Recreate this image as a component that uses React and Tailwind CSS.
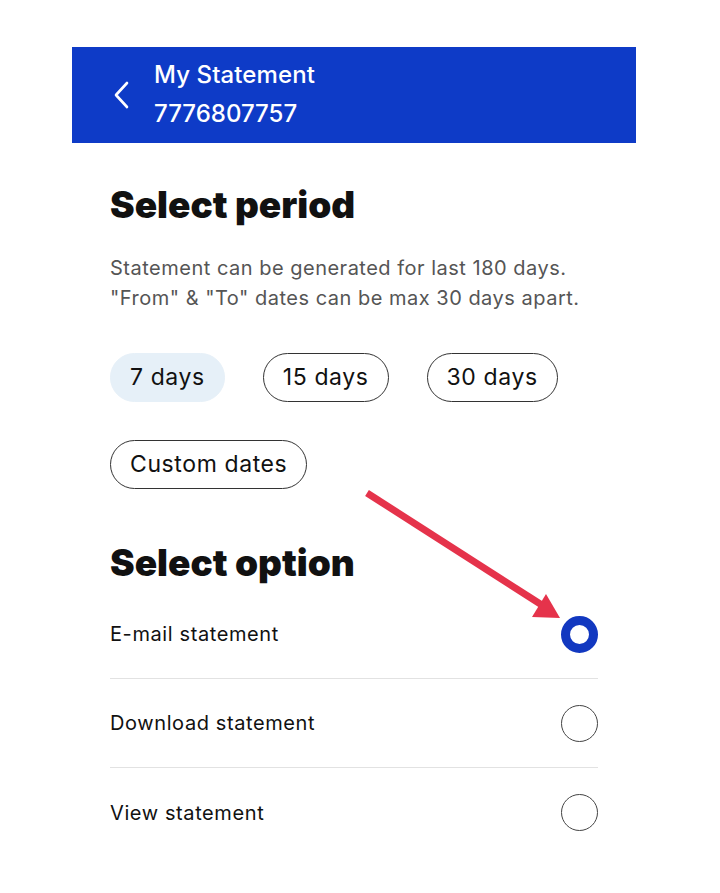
import { useState } from "react";

const periods = ["7 days", "15 days", "30 days", "Custom dates"];
const options = ["E-mail statement", "Download statement", "View statement"];

export default function App() {
  const [period, setPeriod] = useState("7 days");
  const [option, setOption] = useState("E-mail statement");

  return (
    <div className="min-h-[893px] w-[720px] bg-white pt-[47px] font-['Inter',sans-serif] text-[#111]">
      <div className="relative mx-[72px] w-[564px]">
        <div className="flex h-[96px] items-center bg-[#0e3bc7] pl-[40px] text-white">
          <svg width="20" height="30" viewBox="0 0 20 30" fill="none" className="mr-[22px]">
            <path d="M15 3 L4 15 L15 27" stroke="white" strokeWidth="2.6" strokeLinecap="round" strokeLinejoin="round" />
          </svg>
          <div className="flex flex-col gap-[9px] pb-[2px]">
            <p className="text-[24px] leading-[30px] font-medium tracking-[0.1px]">My Statement</p>
            <p className="text-[24px] leading-[30px] font-medium">7776807757</p>
          </div>
        </div>

        <div className="px-[38px]">
          <h1 className="mt-[38px] text-[37px] leading-[48px] font-black">Select period</h1>
          <p className="mt-[24px] text-[20px] leading-[30px] tracking-[0.5px] text-[#555]">
            Statement can be generated for last 180 days.
            <br />
            "From" &amp; "To" dates can be max 30 days apart.
          </p>

          <div className="mt-[40px] flex flex-wrap gap-x-[38px] gap-y-[38px]">
            {periods.map((p) => (
              <button
                key={p}
                onClick={() => setPeriod(p)}
                className={
                  p === period
                    ? "h-[49px] rounded-full border border-[#e6f0f8] bg-[#e6f0f8] px-[19px] text-[23px] tracking-[0.6px] text-[#111]"
                    : "h-[49px] rounded-full border border-[#333] bg-white px-[19px] text-[23px] tracking-[0.6px] text-[#111]"
                }
              >
                {p}
              </button>
            ))}
          </div>

          <h2 className="mt-[50px] text-[37px] leading-[48px] font-black">Select option</h2>

          <div className="mt-[3px]">
            {options.map((o, i) => (
              <div
                key={o}
                onClick={() => setOption(o)}
                className={
                  i < options.length - 1
                    ? "flex h-[89px] items-center justify-between border-b border-[#e2e2e2]"
                    : "flex h-[89px] items-center justify-between"
                }
              >
                <span className="text-[20px] tracking-[0.6px]">{o}</span>
                {o === option ? (
                  <span className="h-[37px] w-[37px] rounded-full border-[9px] border-[#1238c0]" />
                ) : (
                  <span className="h-[37px] w-[37px] rounded-full border-[1.5px] border-[#444]" />
                )}
              </div>
            ))}
          </div>
        </div>

        <svg className="pointer-events-none absolute left-[280px] top-[430px]" width="230" height="160" viewBox="0 0 230 160">
          <path d="M15 16 L193 130" stroke="#e5334b" strokeWidth="7" strokeLinecap="butt" />
          <polygon points="208,141 180,140 194,117" fill="#e5334b" />
        </svg>
      </div>
    </div>
  );
}
